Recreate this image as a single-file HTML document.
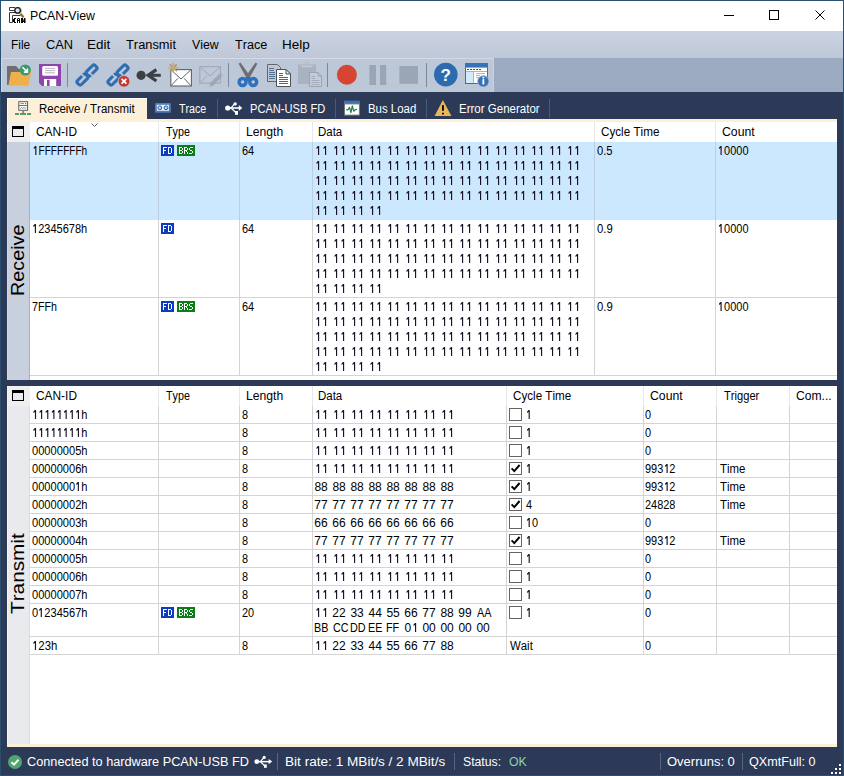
<!DOCTYPE html><html><head><meta charset="utf-8"><title>PCAN-View</title><style>
*{margin:0;padding:0;box-sizing:border-box}
html,body{width:844px;height:776px;overflow:hidden}
body{position:relative;font-kerning:none;font-feature-settings:"kern" 0;font-family:"Liberation Sans",sans-serif;font-size:12px;color:#000;background:#2c3a58}
.a{position:absolute}
.t{position:absolute;white-space:nowrap;line-height:14px}
svg{position:absolute;overflow:visible}
.bw{color:#fff}
.vl{position:absolute;width:1px;background:#d4d4d4}
.hl{position:absolute;height:1px;background:#d4d4d4}
</style></head><body>
<svg width="0" height="0" style="left:0;top:0"><defs><path id="one" fill="#1a1226" d="M2 0H3.15V9H2V1.9L0.5 2.9V1.6Z"/><symbol id="fd" overflow="visible"><rect x="0" y="0" width="13" height="11" fill="#0b3cc0"/><g fill="#fff"><rect x="2" y="2" width="1" height="7"/><rect x="2" y="2" width="4" height="1"/><rect x="2" y="5" width="3" height="1"/><rect x="7" y="2" width="1" height="7"/><rect x="7" y="2" width="3" height="1"/><rect x="7" y="8" width="3" height="1"/><rect x="10" y="3" width="1" height="5"/></g></symbol><symbol id="brs" overflow="visible"><rect x="16" y="0" width="18" height="11" fill="#0a7f18"/><g fill="#fff"><rect x="18" y="2" width="1" height="7"/><rect x="18" y="2" width="3" height="1"/><rect x="18" y="5" width="3" height="1"/><rect x="18" y="8" width="3" height="1"/><rect x="21" y="3" width="1" height="2"/><rect x="21" y="6" width="1" height="2"/><rect x="23" y="2" width="1" height="7"/><rect x="23" y="2" width="3" height="1"/><rect x="23" y="5" width="3" height="1"/><rect x="26" y="3" width="1" height="2"/><rect x="25" y="6" width="1" height="1"/><rect x="26" y="7" width="1" height="2"/><rect x="29" y="2" width="3" height="1"/><rect x="28" y="3" width="1" height="2"/><rect x="29" y="5" width="2" height="1"/><rect x="31" y="6" width="1" height="2"/><rect x="28" y="8" width="3" height="1"/></g></symbol></defs></svg>
<div class="a" style="left:0;top:0;width:844px;height:31px;background:#fff"></div>
<svg style="left:0;top:0" width="30" height="30" viewBox="0 0 30 30">
<path d="M9.5 10.5 V7.5 H15 M9.5 10.5 H14.6 M9.5 12.5 H15.2 M9.5 12.5 V22.5 H12.5 V15.5 H20.5" fill="none" stroke="#3c3c3c" stroke-width="1"/>
<path d="M20.3 13.8 L23.6 17.2" stroke="#8c6b28" stroke-width="2.2"/>
<circle cx="17.6" cy="10.4" r="2.8" fill="#dfe4ea" stroke="#111" stroke-width="1.3"/>
<path d="M20.8 8.6 A3.8 3.8 0 0 1 21.2 12.4" fill="none" stroke="#8a9499" stroke-width="0.8"/>
<g fill="#000">
<rect x="13" y="19" width="2" height="3"/><rect x="14" y="18" width="2" height="1"/><rect x="14" y="22" width="2" height="1"/>
<rect x="17" y="19" width="1" height="4"/><rect x="19" y="19" width="1" height="4"/><rect x="17.5" y="18" width="2" height="1"/><rect x="17" y="20" width="3" height="1"/>
<rect x="21" y="18" width="2" height="5"/><rect x="24" y="18" width="1.5" height="5"/><rect x="22.5" y="19" width="1" height="1.5"/><rect x="23" y="20.5" width="1" height="1.5"/>
</g>
</svg>

<div class="t" style="left:29.69px;top:8.84px;line-height:14px;font-size:12px;transform:scaleX(1.0258);transform-origin:0 0;">PCAN-View</div>
<div class="a" style="left:724px;top:15px;width:10px;height:1px;background:#000"></div>
<div class="a" style="left:769px;top:10px;width:10px;height:10px;border:1px solid #000"></div>
<svg style="left:815px;top:10px" width="10" height="10"><path d="M0.5 0.5L9.5 9.5M9.5 0.5L0.5 9.5" stroke="#000" stroke-width="1"/></svg>
<div class="a" style="left:0;top:31px;width:844px;height:27px;background:linear-gradient(#cbd3e1,#bfc8d8)"></div>
<div class="t" style="left:10.77px;top:37.84px;line-height:14px;font-size:12px;transform:scaleX(0.9906);transform-origin:0 0;">File</div>
<div class="t" style="left:45.75px;top:37.84px;line-height:14px;font-size:12px;transform:scaleX(1.0654);transform-origin:0 0;">CAN</div>
<div class="t" style="left:86.90px;top:37.84px;line-height:14px;font-size:12px;transform:scaleX(1.1221);transform-origin:0 0;">Edit</div>
<div class="t" style="left:126.31px;top:37.84px;line-height:14px;font-size:12px;transform:scaleX(1.0710);transform-origin:0 0;">Transmit</div>
<div class="t" style="left:192.25px;top:37.84px;line-height:14px;font-size:12px;transform:scaleX(1.0275);transform-origin:0 0;">View</div>
<div class="t" style="left:234.92px;top:37.84px;line-height:14px;font-size:12px;transform:scaleX(1.0545);transform-origin:0 0;">Trace</div>
<div class="t" style="left:282.39px;top:37.84px;line-height:14px;font-size:12px;transform:scaleX(1.1254);transform-origin:0 0;">Help</div>
<div class="a" style="left:0;top:58px;width:844px;height:34px;background:#9caac1"></div>
<div class="a" style="left:1px;top:58px;width:493px;height:34px;background:#bcc7d8;border-top:1px solid #d3dae6;border-left:1px solid #d3dae6;border-right:1px solid #c9d2e0"></div>
<svg style="left:0;top:57px" width="500" height="35" viewBox="0 57 500 35">
<!-- separators -->
<g fill="#7d889b"><rect x="67" y="63" width="1" height="24"/><rect x="228" y="63" width="1" height="24"/><rect x="327" y="63" width="1" height="24"/><rect x="426" y="63" width="1" height="24"/></g>
<!-- open folder -->
<path d="M7 66 H16 L19 69 H23 V85 H7 Z" fill="#6f6f73"/>
<path d="M11 72 H31 L28.5 85.5 H8.5 Z" fill="#efb04c"/>
<circle cx="25.3" cy="70" r="5.6" fill="#3a9a6c"/>
<path d="M22.5 67.2 L27 71.7 M27.4 68.6 V72.1 H23.9" fill="none" stroke="#fff" stroke-width="1.6"/>
<!-- save -->
<path d="M39 64 H61 V86 H42 L39 83 Z" fill="#8e44ad"/>
<rect x="42.2" y="66" width="15.8" height="9.8" rx="1.5" fill="#fff"/>
<g stroke="#a89bb0" stroke-width="0.8"><line x1="45" y1="68.4" x2="55" y2="68.4"/><line x1="45" y1="70.6" x2="55" y2="70.6"/><line x1="45" y1="72.8" x2="55" y2="72.8"/></g>
<rect x="44" y="79" width="12.2" height="7" fill="#fff"/>
<rect x="47" y="79.8" width="2.6" height="6.2" fill="#8e44ad"/>
<!-- link -->
<g transform="translate(87 75) rotate(-45)" fill="none" stroke="#2f6db3" stroke-width="3">
<path d="M4.2 2.8 H10.7 Q12.5 2.8 12.5 1 V-1 Q12.5 -2.8 10.7 -2.8 H2.3 Q0.5 -2.8 0.5 -1 V1 Q0.5 2.8 2.3 2.8 H2.6"/>
<path d="M-4.2 -2.8 H-10.7 Q-12.5 -2.8 -12.5 -1 V1 Q-12.5 2.8 -10.7 2.8 H-2.3 Q-0.5 2.8 -0.5 1 V-1 Q-0.5 -2.8 -2.3 -2.8 H-2.6"/>
</g>
<!-- unlink -->
<g transform="translate(118 75) rotate(-45)" fill="none" stroke="#2f6db3" stroke-width="3">
<path d="M4.2 2.8 H10.7 Q12.5 2.8 12.5 1 V-1 Q12.5 -2.8 10.7 -2.8 H2.3 Q0.5 -2.8 0.5 -1 V1 Q0.5 2.8 2.3 2.8 H2.6"/>
<path d="M-4.2 -2.8 H-10.7 Q-12.5 -2.8 -12.5 -1 V1 Q-12.5 2.8 -10.7 2.8 H-2.3 Q-0.5 2.8 -0.5 1 V-1 Q-0.5 -2.8 -2.3 -2.8 H-2.6"/>
</g>
<circle cx="124" cy="81.3" r="5.8" fill="#c9372c" stroke="#bcc7d8" stroke-width="0.8"/>
<path d="M121.6 78.9 L126.4 83.7 M126.4 78.9 L121.6 83.7" stroke="#fff" stroke-width="1.7"/>
<!-- receive arrow -->
<path d="M156.4 69.6 L148.2 75.3 L156.4 81" fill="none" stroke="#3b4043" stroke-width="3.3" stroke-linejoin="miter"/>
<rect x="148" y="73.8" width="12.8" height="3" fill="#3b4043"/>
<circle cx="141.1" cy="75.3" r="4.6" fill="#3b4043"/>
<!-- new message -->
<rect x="170.8" y="69.6" width="20.6" height="16.4" fill="#fff" stroke="#5f6369" stroke-width="1.1"/>
<path d="M171.2 70 L181 79 L190.8 70 M171.2 85.6 L177.8 78.4 M190.8 85.6 L184.2 78.4" fill="none" stroke="#5f6369" stroke-width="1"/>
<g stroke-width="1.6" stroke-linecap="round"><line x1="170.2" y1="64.6" x2="176.4" y2="70.8" stroke="#a99c86"/><line x1="176.4" y1="64.6" x2="170.2" y2="70.8" stroke="#a99c86"/><line x1="173.3" y1="63.4" x2="173.3" y2="72" stroke="#dba94f"/><line x1="169" y1="67.7" x2="177.6" y2="67.7" stroke="#dba94f"/></g>
<!-- edit message (disabled) -->
<rect x="199.8" y="66.7" width="20.6" height="16.4" fill="none" stroke="#9ea7b3" stroke-width="1.1"/>
<path d="M200.2 67.1 L210.1 76 L220 67.1 M200.2 82.7 L207 75.6" fill="none" stroke="#9ea7b3" stroke-width="1"/>
<path d="M209.4 86.8 L210.6 82.6 L219.4 73.8 L222.2 76.6 L213.4 85.4 Z" fill="#9ea7b3"/>
<path d="M220.3 72.6 L223.2 75.5" stroke="#9ea7b3" stroke-width="1"/>
<!-- cut -->
<path d="M238.6 63.8 L240.4 62.6 L250.2 76.2 L246.2 77.4 Z" fill="#6c6e70"/>
<path d="M257.4 63.8 L255.6 62.6 L245.8 76.2 L249.8 77.4 Z" fill="#6c6e70"/>
<circle cx="242.6" cy="82" r="3.5" fill="none" stroke="#2f70bd" stroke-width="3.4"/>
<circle cx="253.2" cy="82" r="3.5" fill="none" stroke="#2f70bd" stroke-width="3.4"/>
<rect x="245.5" y="77" width="5" height="4" fill="#2f70bd"/>
<!-- copy -->
<path d="M267.5 64.5 H277.5 L280.5 67.5 V81.5 H267.5 Z" fill="#c3c9d2" stroke="#62676e" stroke-width="1"/>
<g stroke="#56708f" stroke-width="1"><line x1="269" y1="68.5" x2="274" y2="68.5"/><line x1="269" y1="70.5" x2="274" y2="70.5"/><line x1="269" y1="72.5" x2="275" y2="72.5"/><line x1="269" y1="74.5" x2="275" y2="74.5"/><line x1="269" y1="76.5" x2="275" y2="76.5"/><line x1="269" y1="78.5" x2="275" y2="78.5"/></g>
<path d="M276.5 69.5 H286 L290.5 74 V86.5 H276.5 Z" fill="#fff" stroke="#4e535b" stroke-width="1"/>
<path d="M286 69.5 V74 H290.5 Z" fill="#e8eaee" stroke="#4e535b" stroke-width="1"/>
<g stroke="#3d6a9a" stroke-width="1"><line x1="279" y1="73.5" x2="283" y2="73.5"/><line x1="279" y1="75.5" x2="283" y2="75.5"/><line x1="279" y1="77.5" x2="288" y2="77.5"/><line x1="279" y1="79.5" x2="288" y2="79.5"/><line x1="279" y1="81.5" x2="288" y2="81.5"/><line x1="279" y1="83.5" x2="288" y2="83.5"/></g>
<!-- paste (disabled) -->
<rect x="298" y="64.5" width="18" height="19.5" fill="#a9b2bf"/>
<rect x="301" y="65" width="12" height="2.4" rx="1" fill="#c3cbd8" stroke="#a9b2bf" stroke-width="0.6"/>
<circle cx="307" cy="63.9" r="1.6" fill="#c3cbd8" stroke="#a9b2bf" stroke-width="0.8"/>
<path d="M309.5 72.5 H318 L321.5 76 V86.5 H309.5 Z" fill="#c4ccd8" stroke="#9aa3b0" stroke-width="1"/>
<path d="M318 72.5 V76 H321.5" fill="none" stroke="#9aa3b0" stroke-width="1"/>
<g stroke="#9aa3b0" stroke-width="0.8"><line x1="311.5" y1="76.5" x2="315" y2="76.5"/><line x1="311.5" y1="78.5" x2="315" y2="78.5"/><line x1="311.5" y1="80.5" x2="319.5" y2="80.5"/><line x1="311.5" y1="82.5" x2="319.5" y2="82.5"/><line x1="311.5" y1="84.5" x2="319.5" y2="84.5"/></g>
<!-- record / pause / stop -->
<circle cx="346.9" cy="74.8" r="10" fill="#d64532"/>
<rect x="369.4" y="65" width="6.6" height="20" fill="#9aa5b6"/>
<rect x="380" y="65" width="6.2" height="20" fill="#9aa5b6"/>
<rect x="399.4" y="66" width="18.6" height="17.8" fill="#9aa5b6"/>
<!-- help -->
<circle cx="445.8" cy="74.6" r="11.8" fill="#2d6bb0"/>
<text x="445.8" y="81.2" font-family="Liberation Sans" font-weight="bold" font-size="17" fill="#fff" text-anchor="middle">?</text>
<!-- info window -->
<rect x="465.5" y="63.5" width="22" height="20" fill="#fff" stroke="#62676e" stroke-width="1"/>
<rect x="465" y="63" width="23" height="4.6" fill="#3572b8"/>
<g fill="#4a4f55"><rect x="467" y="69" width="2" height="1"/><rect x="470" y="69" width="2" height="1"/><rect x="473" y="69" width="2" height="1"/><rect x="476" y="69" width="2" height="1"/><rect x="479" y="69" width="2" height="1"/></g>
<rect x="466" y="71" width="21" height="0.8" fill="#9aa0a8"/>
<rect x="466" y="72" width="7" height="11" fill="#d4eaf9"/>
<line x1="473.5" y1="72" x2="473.5" y2="83" stroke="#9aa0a8" stroke-width="0.8"/>
<g stroke="#8a9098" stroke-width="0.7"><line x1="476" y1="73.6" x2="485" y2="73.6"/><line x1="476" y1="75.6" x2="480" y2="75.6"/><line x1="476" y1="77.6" x2="479" y2="77.6"/></g>
<circle cx="483.3" cy="81.3" r="5.7" fill="#3572b8" stroke="#bcc7d8" stroke-width="0.7"/>
<rect x="482.4" y="79.2" width="1.9" height="5.2" fill="#fff"/><rect x="482.4" y="76.8" width="1.9" height="1.6" fill="#fff"/>
</svg>
<div class="a" style="left:0;top:92px;width:844px;height:684px;background:#2c3a58"></div>
<div class="a" style="left:7px;top:98px;width:140px;height:24px;background:#fdf0d8;border-left:1px solid #fff;border-top:1px solid #fff"></div>
<svg style="left:0;top:92px" width="560" height="30" viewBox="0 92 560 30">
<rect x="18.8" y="101.7" width="8.8" height="8.6" fill="#fff" stroke="#5c5c5c" stroke-width="1"/>
<line x1="18.8" y1="105.5" x2="27.6" y2="105.5" stroke="#5c5c5c" stroke-width="0.9"/>
<line x1="20.5" y1="103.6" x2="24" y2="103.6" stroke="#6a6a6a" stroke-width="0.8"/>
<rect x="25" y="103" width="1.2" height="1.2" fill="#6a6a6a"/>
<path d="M20.3 108.6 L21.5 107.2 L22.7 108.6 L23.9 107.2 L25.1 108.6 L26.2 107.3" fill="none" stroke="#6a6a6a" stroke-width="0.7"/>
<rect x="22.3" y="110.5" width="1.8" height="2.8" fill="#5c9a6e"/>
<rect x="15" y="113" width="4" height="2" fill="#5c9a6e"/>
<rect x="20" y="113" width="6" height="2" fill="#5c9a6e"/>
<rect x="27" y="113" width="4" height="2" fill="#5c9a6e"/>
<rect x="155" y="103" width="15.9" height="9.8" rx="1" fill="#4b7bb8"/>
<rect x="156.8" y="104.8" width="12.1" height="6" fill="#eef4fc"/>
<circle cx="159.8" cy="107.8" r="1.9" fill="#bcd6f2" stroke="#2a5a98" stroke-width="1"/>
<circle cx="166" cy="107.8" r="1.9" fill="#bcd6f2" stroke="#2a5a98" stroke-width="1"/>
<circle cx="227.7" cy="108" r="2.6" fill="#fff"/>
<rect x="227.7" y="107.2" width="12" height="1.6" fill="#fff"/>
<path d="M238.8 105 L242.3 108 L238.8 111 Z" fill="#fff"/>
<path d="M231 108 L234.4 104.2 M231 108 L235.8 112.5" fill="none" stroke="#fff" stroke-width="1.2"/>
<circle cx="235.2" cy="103.9" r="1.7" fill="#fff"/>
<rect x="235" y="111" width="3" height="3.8" fill="#fff"/>
<rect x="344" y="100.7" width="15.9" height="3.2" fill="#3f73b0"/>
<rect x="344.5" y="103.9" width="14.9" height="11.2" fill="#fff" stroke="#70757d" stroke-width="1"/>
<path d="M346.2 109.6 L348 109.8 L349.5 107.4 L350.9 112.6 L352.3 105.8 L353.7 111.2 L355.5 109.5 L357 109.3" fill="none" stroke="#1f7d4c" stroke-width="1.2" stroke-linejoin="round"/>
<path d="M442.9 99.9 L451.4 115.9 L434.6 115.9 Z" fill="#e9b65a"/>
<rect x="442" y="105.2" width="1.9" height="5.5" fill="#000"/>
<rect x="442" y="112.8" width="1.9" height="1.6" fill="#000"/>
</svg>

<div class="t" style="left:38.86px;top:101.84px;line-height:14px;font-size:12px;transform:scaleX(0.9570);transform-origin:0 0;">Receive / Transmit</div>
<div class="t bw" style="left:179.26px;top:101.84px;line-height:14px;font-size:12px;transform:scaleX(0.8905);transform-origin:0 0;">Trace</div>
<div class="t bw" style="left:249.99px;top:101.84px;line-height:14px;font-size:12px;transform:scaleX(0.9250);transform-origin:0 0;">PCAN-USB FD</div>
<div class="t bw" style="left:367.66px;top:101.84px;line-height:14px;font-size:12px;transform:scaleX(0.9520);transform-origin:0 0;">Bus Load</div>
<div class="t bw" style="left:458.66px;top:101.84px;line-height:14px;font-size:12px;transform:scaleX(0.9596);transform-origin:0 0;">Error Generator</div>
<div class="a" style="left:217px;top:99px;width:1px;height:19px;background:#4a5a7a"></div>
<div class="a" style="left:335px;top:99px;width:1px;height:19px;background:#4a5a7a"></div>
<div class="a" style="left:426px;top:99px;width:1px;height:19px;background:#4a5a7a"></div>
<div class="a" style="left:549px;top:99px;width:1px;height:19px;background:#4a5a7a"></div>
<div class="a" style="left:7px;top:119px;width:830px;height:3px;background:#fdf0d8"></div>
<div class="a" style="left:7px;top:122px;width:830px;height:258px;background:#fff"></div>
<div class="a" style="left:7px;top:142px;width:23px;height:238px;background:#c8d0de;border-left:1px solid #d2dae8;border-right:1px solid #aab1c2"></div>
<div class="a" style="left:8px;top:122px;width:22px;height:20px;background:#efefef"></div>
<div class="a" style="left:7px;top:122px;width:1px;height:20px;background:#fff"></div>
<div class="a" style="left:12px;top:126px;width:12px;height:11px;border:1.5px solid #000;border-top-width:3px;background:#ececec"></div>
<div class="a" style="left:30px;top:142px;width:807px;height:78px;background:#cce8ff"></div>
<div class="vl" style="left:158px;top:122px;height:20px;background:#e8e8e8"></div>
<div class="vl" style="left:158px;top:142px;height:78px;background:#bccfe0"></div>
<div class="vl" style="left:158px;top:220px;height:155px"></div>
<div class="vl" style="left:239px;top:122px;height:20px;background:#e8e8e8"></div>
<div class="vl" style="left:239px;top:142px;height:78px;background:#bccfe0"></div>
<div class="vl" style="left:239px;top:220px;height:155px"></div>
<div class="vl" style="left:312px;top:122px;height:20px;background:#e8e8e8"></div>
<div class="vl" style="left:312px;top:142px;height:78px;background:#bccfe0"></div>
<div class="vl" style="left:312px;top:220px;height:155px"></div>
<div class="vl" style="left:594px;top:122px;height:20px;background:#e8e8e8"></div>
<div class="vl" style="left:594px;top:142px;height:78px;background:#bccfe0"></div>
<div class="vl" style="left:594px;top:220px;height:155px"></div>
<div class="vl" style="left:715px;top:122px;height:20px;background:#e8e8e8"></div>
<div class="vl" style="left:715px;top:142px;height:78px;background:#bccfe0"></div>
<div class="vl" style="left:715px;top:220px;height:155px"></div>
<div class="hl" style="left:30px;top:297px;width:807px"></div>
<div class="hl" style="left:30px;top:375px;width:807px"></div>
<div class="t" style="left:36.00px;top:124.84px;line-height:14px;font-size:12px;transform:scaleX(0.9913);transform-origin:0 0;">CAN-ID</div>
<div class="t" style="left:165.66px;top:124.84px;line-height:14px;font-size:12px;transform:scaleX(0.8966);transform-origin:0 0;">Type</div>
<div class="t" style="left:245.50px;top:124.84px;line-height:14px;font-size:12px;transform:scaleX(1.0160);transform-origin:0 0;">Length</div>
<div class="t" style="left:318.26px;top:124.84px;line-height:14px;font-size:12px;transform:scaleX(0.9564);transform-origin:0 0;">Data</div>
<div class="t" style="left:600.81px;top:124.84px;line-height:14px;font-size:12px;transform:scaleX(0.9734);transform-origin:0 0;">Cycle Time</div>
<div class="t" style="left:722.08px;top:124.84px;line-height:14px;font-size:12px;transform:scaleX(1.0216);transform-origin:0 0;">Count</div>
<svg style="left:91px;top:123px" width="8" height="5"><path d="M0.5 0.5L3.5 3.5L6.5 0.5" fill="none" stroke="#5a5a5a" stroke-width="1"/></svg>
<div class="t" style="left:6.79px;top:295.62px;line-height:22px;font-size:18.5px;transform:rotate(-90deg) scaleX(1.0698);transform-origin:0 0">Receive</div>
<div class="t" style="left:32.53px;top:143.84px;line-height:14px;font-size:12px;transform:scaleX(0.8370);transform-origin:0 0;"><i style="color:transparent;font-style:normal">1</i>FFFFFFFh</div>
<svg style="left:161px;top:145px" width="34" height="11"><use href="#fd"/><use href="#brs"/></svg>
<div class="t" style="left:241.95px;top:143.84px;line-height:14px;font-size:12px;transform:scaleX(0.9100);transform-origin:0 0;">64</div>
<div class="t" style="left:596.66px;top:143.84px;line-height:14px;font-size:12px;transform:scaleX(0.9358);transform-origin:0 0;">0.5</div>
<div class="t" style="left:717.57px;top:143.84px;line-height:14px;font-size:12px;transform:scaleX(0.9129);transform-origin:0 0;"><i style="color:transparent;font-style:normal">1</i>0000</div>
<div class="t" style="left:31.86px;top:221.84px;line-height:14px;font-size:12px;transform:scaleX(0.9183);transform-origin:0 0;"><i style="color:transparent;font-style:normal">1</i>2345678h</div>
<svg style="left:161px;top:223px" width="34" height="11"><use href="#fd"/></svg>
<div class="t" style="left:241.95px;top:221.84px;line-height:14px;font-size:12px;transform:scaleX(0.9100);transform-origin:0 0;">64</div>
<div class="t" style="left:596.66px;top:221.84px;line-height:14px;font-size:12px;transform:scaleX(0.9396);transform-origin:0 0;">0.9</div>
<div class="t" style="left:717.57px;top:221.84px;line-height:14px;font-size:12px;transform:scaleX(0.9129);transform-origin:0 0;"><i style="color:transparent;font-style:normal">1</i>0000</div>
<div class="t" style="left:32.15px;top:299.84px;line-height:14px;font-size:12px;transform:scaleX(0.8905);transform-origin:0 0;">7FFh</div>
<svg style="left:161px;top:301px" width="34" height="11"><use href="#fd"/><use href="#brs"/></svg>
<div class="t" style="left:241.95px;top:299.84px;line-height:14px;font-size:12px;transform:scaleX(0.9100);transform-origin:0 0;">64</div>
<div class="t" style="left:596.66px;top:299.84px;line-height:14px;font-size:12px;transform:scaleX(0.9396);transform-origin:0 0;">0.9</div>
<div class="t" style="left:717.57px;top:299.84px;line-height:14px;font-size:12px;transform:scaleX(0.9129);transform-origin:0 0;"><i style="color:transparent;font-style:normal">1</i>0000</div>
<svg style="left:0;top:0" width="844" height="776"><use href="#one" x="33.26" y="146"/><use href="#one" x="316" y="146"/><use href="#one" x="323" y="146"/><use href="#one" x="334" y="146"/><use href="#one" x="341" y="146"/><use href="#one" x="352" y="146"/><use href="#one" x="359" y="146"/><use href="#one" x="370" y="146"/><use href="#one" x="377" y="146"/><use href="#one" x="388" y="146"/><use href="#one" x="395" y="146"/><use href="#one" x="406" y="146"/><use href="#one" x="413" y="146"/><use href="#one" x="424" y="146"/><use href="#one" x="431" y="146"/><use href="#one" x="442" y="146"/><use href="#one" x="449" y="146"/><use href="#one" x="460" y="146"/><use href="#one" x="467" y="146"/><use href="#one" x="478" y="146"/><use href="#one" x="485" y="146"/><use href="#one" x="496" y="146"/><use href="#one" x="503" y="146"/><use href="#one" x="514" y="146"/><use href="#one" x="521" y="146"/><use href="#one" x="532" y="146"/><use href="#one" x="539" y="146"/><use href="#one" x="550" y="146"/><use href="#one" x="557" y="146"/><use href="#one" x="568" y="146"/><use href="#one" x="575" y="146"/><use href="#one" x="316" y="161"/><use href="#one" x="323" y="161"/><use href="#one" x="334" y="161"/><use href="#one" x="341" y="161"/><use href="#one" x="352" y="161"/><use href="#one" x="359" y="161"/><use href="#one" x="370" y="161"/><use href="#one" x="377" y="161"/><use href="#one" x="388" y="161"/><use href="#one" x="395" y="161"/><use href="#one" x="406" y="161"/><use href="#one" x="413" y="161"/><use href="#one" x="424" y="161"/><use href="#one" x="431" y="161"/><use href="#one" x="442" y="161"/><use href="#one" x="449" y="161"/><use href="#one" x="460" y="161"/><use href="#one" x="467" y="161"/><use href="#one" x="478" y="161"/><use href="#one" x="485" y="161"/><use href="#one" x="496" y="161"/><use href="#one" x="503" y="161"/><use href="#one" x="514" y="161"/><use href="#one" x="521" y="161"/><use href="#one" x="532" y="161"/><use href="#one" x="539" y="161"/><use href="#one" x="550" y="161"/><use href="#one" x="557" y="161"/><use href="#one" x="568" y="161"/><use href="#one" x="575" y="161"/><use href="#one" x="316" y="176"/><use href="#one" x="323" y="176"/><use href="#one" x="334" y="176"/><use href="#one" x="341" y="176"/><use href="#one" x="352" y="176"/><use href="#one" x="359" y="176"/><use href="#one" x="370" y="176"/><use href="#one" x="377" y="176"/><use href="#one" x="388" y="176"/><use href="#one" x="395" y="176"/><use href="#one" x="406" y="176"/><use href="#one" x="413" y="176"/><use href="#one" x="424" y="176"/><use href="#one" x="431" y="176"/><use href="#one" x="442" y="176"/><use href="#one" x="449" y="176"/><use href="#one" x="460" y="176"/><use href="#one" x="467" y="176"/><use href="#one" x="478" y="176"/><use href="#one" x="485" y="176"/><use href="#one" x="496" y="176"/><use href="#one" x="503" y="176"/><use href="#one" x="514" y="176"/><use href="#one" x="521" y="176"/><use href="#one" x="532" y="176"/><use href="#one" x="539" y="176"/><use href="#one" x="550" y="176"/><use href="#one" x="557" y="176"/><use href="#one" x="568" y="176"/><use href="#one" x="575" y="176"/><use href="#one" x="316" y="191"/><use href="#one" x="323" y="191"/><use href="#one" x="334" y="191"/><use href="#one" x="341" y="191"/><use href="#one" x="352" y="191"/><use href="#one" x="359" y="191"/><use href="#one" x="370" y="191"/><use href="#one" x="377" y="191"/><use href="#one" x="388" y="191"/><use href="#one" x="395" y="191"/><use href="#one" x="406" y="191"/><use href="#one" x="413" y="191"/><use href="#one" x="424" y="191"/><use href="#one" x="431" y="191"/><use href="#one" x="442" y="191"/><use href="#one" x="449" y="191"/><use href="#one" x="460" y="191"/><use href="#one" x="467" y="191"/><use href="#one" x="478" y="191"/><use href="#one" x="485" y="191"/><use href="#one" x="496" y="191"/><use href="#one" x="503" y="191"/><use href="#one" x="514" y="191"/><use href="#one" x="521" y="191"/><use href="#one" x="532" y="191"/><use href="#one" x="539" y="191"/><use href="#one" x="550" y="191"/><use href="#one" x="557" y="191"/><use href="#one" x="568" y="191"/><use href="#one" x="575" y="191"/><use href="#one" x="316" y="206"/><use href="#one" x="323" y="206"/><use href="#one" x="334" y="206"/><use href="#one" x="341" y="206"/><use href="#one" x="352" y="206"/><use href="#one" x="359" y="206"/><use href="#one" x="370" y="206"/><use href="#one" x="377" y="206"/><use href="#one" x="718.52" y="146"/><use href="#one" x="32.83" y="224"/><use href="#one" x="316" y="224"/><use href="#one" x="323" y="224"/><use href="#one" x="334" y="224"/><use href="#one" x="341" y="224"/><use href="#one" x="352" y="224"/><use href="#one" x="359" y="224"/><use href="#one" x="370" y="224"/><use href="#one" x="377" y="224"/><use href="#one" x="388" y="224"/><use href="#one" x="395" y="224"/><use href="#one" x="406" y="224"/><use href="#one" x="413" y="224"/><use href="#one" x="424" y="224"/><use href="#one" x="431" y="224"/><use href="#one" x="442" y="224"/><use href="#one" x="449" y="224"/><use href="#one" x="460" y="224"/><use href="#one" x="467" y="224"/><use href="#one" x="478" y="224"/><use href="#one" x="485" y="224"/><use href="#one" x="496" y="224"/><use href="#one" x="503" y="224"/><use href="#one" x="514" y="224"/><use href="#one" x="521" y="224"/><use href="#one" x="532" y="224"/><use href="#one" x="539" y="224"/><use href="#one" x="550" y="224"/><use href="#one" x="557" y="224"/><use href="#one" x="568" y="224"/><use href="#one" x="575" y="224"/><use href="#one" x="316" y="239"/><use href="#one" x="323" y="239"/><use href="#one" x="334" y="239"/><use href="#one" x="341" y="239"/><use href="#one" x="352" y="239"/><use href="#one" x="359" y="239"/><use href="#one" x="370" y="239"/><use href="#one" x="377" y="239"/><use href="#one" x="388" y="239"/><use href="#one" x="395" y="239"/><use href="#one" x="406" y="239"/><use href="#one" x="413" y="239"/><use href="#one" x="424" y="239"/><use href="#one" x="431" y="239"/><use href="#one" x="442" y="239"/><use href="#one" x="449" y="239"/><use href="#one" x="460" y="239"/><use href="#one" x="467" y="239"/><use href="#one" x="478" y="239"/><use href="#one" x="485" y="239"/><use href="#one" x="496" y="239"/><use href="#one" x="503" y="239"/><use href="#one" x="514" y="239"/><use href="#one" x="521" y="239"/><use href="#one" x="532" y="239"/><use href="#one" x="539" y="239"/><use href="#one" x="550" y="239"/><use href="#one" x="557" y="239"/><use href="#one" x="568" y="239"/><use href="#one" x="575" y="239"/><use href="#one" x="316" y="254"/><use href="#one" x="323" y="254"/><use href="#one" x="334" y="254"/><use href="#one" x="341" y="254"/><use href="#one" x="352" y="254"/><use href="#one" x="359" y="254"/><use href="#one" x="370" y="254"/><use href="#one" x="377" y="254"/><use href="#one" x="388" y="254"/><use href="#one" x="395" y="254"/><use href="#one" x="406" y="254"/><use href="#one" x="413" y="254"/><use href="#one" x="424" y="254"/><use href="#one" x="431" y="254"/><use href="#one" x="442" y="254"/><use href="#one" x="449" y="254"/><use href="#one" x="460" y="254"/><use href="#one" x="467" y="254"/><use href="#one" x="478" y="254"/><use href="#one" x="485" y="254"/><use href="#one" x="496" y="254"/><use href="#one" x="503" y="254"/><use href="#one" x="514" y="254"/><use href="#one" x="521" y="254"/><use href="#one" x="532" y="254"/><use href="#one" x="539" y="254"/><use href="#one" x="550" y="254"/><use href="#one" x="557" y="254"/><use href="#one" x="568" y="254"/><use href="#one" x="575" y="254"/><use href="#one" x="316" y="269"/><use href="#one" x="323" y="269"/><use href="#one" x="334" y="269"/><use href="#one" x="341" y="269"/><use href="#one" x="352" y="269"/><use href="#one" x="359" y="269"/><use href="#one" x="370" y="269"/><use href="#one" x="377" y="269"/><use href="#one" x="388" y="269"/><use href="#one" x="395" y="269"/><use href="#one" x="406" y="269"/><use href="#one" x="413" y="269"/><use href="#one" x="424" y="269"/><use href="#one" x="431" y="269"/><use href="#one" x="442" y="269"/><use href="#one" x="449" y="269"/><use href="#one" x="460" y="269"/><use href="#one" x="467" y="269"/><use href="#one" x="478" y="269"/><use href="#one" x="485" y="269"/><use href="#one" x="496" y="269"/><use href="#one" x="503" y="269"/><use href="#one" x="514" y="269"/><use href="#one" x="521" y="269"/><use href="#one" x="532" y="269"/><use href="#one" x="539" y="269"/><use href="#one" x="550" y="269"/><use href="#one" x="557" y="269"/><use href="#one" x="568" y="269"/><use href="#one" x="575" y="269"/><use href="#one" x="316" y="284"/><use href="#one" x="323" y="284"/><use href="#one" x="334" y="284"/><use href="#one" x="341" y="284"/><use href="#one" x="352" y="284"/><use href="#one" x="359" y="284"/><use href="#one" x="370" y="284"/><use href="#one" x="377" y="284"/><use href="#one" x="718.52" y="224"/><use href="#one" x="316" y="302"/><use href="#one" x="323" y="302"/><use href="#one" x="334" y="302"/><use href="#one" x="341" y="302"/><use href="#one" x="352" y="302"/><use href="#one" x="359" y="302"/><use href="#one" x="370" y="302"/><use href="#one" x="377" y="302"/><use href="#one" x="388" y="302"/><use href="#one" x="395" y="302"/><use href="#one" x="406" y="302"/><use href="#one" x="413" y="302"/><use href="#one" x="424" y="302"/><use href="#one" x="431" y="302"/><use href="#one" x="442" y="302"/><use href="#one" x="449" y="302"/><use href="#one" x="460" y="302"/><use href="#one" x="467" y="302"/><use href="#one" x="478" y="302"/><use href="#one" x="485" y="302"/><use href="#one" x="496" y="302"/><use href="#one" x="503" y="302"/><use href="#one" x="514" y="302"/><use href="#one" x="521" y="302"/><use href="#one" x="532" y="302"/><use href="#one" x="539" y="302"/><use href="#one" x="550" y="302"/><use href="#one" x="557" y="302"/><use href="#one" x="568" y="302"/><use href="#one" x="575" y="302"/><use href="#one" x="316" y="317"/><use href="#one" x="323" y="317"/><use href="#one" x="334" y="317"/><use href="#one" x="341" y="317"/><use href="#one" x="352" y="317"/><use href="#one" x="359" y="317"/><use href="#one" x="370" y="317"/><use href="#one" x="377" y="317"/><use href="#one" x="388" y="317"/><use href="#one" x="395" y="317"/><use href="#one" x="406" y="317"/><use href="#one" x="413" y="317"/><use href="#one" x="424" y="317"/><use href="#one" x="431" y="317"/><use href="#one" x="442" y="317"/><use href="#one" x="449" y="317"/><use href="#one" x="460" y="317"/><use href="#one" x="467" y="317"/><use href="#one" x="478" y="317"/><use href="#one" x="485" y="317"/><use href="#one" x="496" y="317"/><use href="#one" x="503" y="317"/><use href="#one" x="514" y="317"/><use href="#one" x="521" y="317"/><use href="#one" x="532" y="317"/><use href="#one" x="539" y="317"/><use href="#one" x="550" y="317"/><use href="#one" x="557" y="317"/><use href="#one" x="568" y="317"/><use href="#one" x="575" y="317"/><use href="#one" x="316" y="332"/><use href="#one" x="323" y="332"/><use href="#one" x="334" y="332"/><use href="#one" x="341" y="332"/><use href="#one" x="352" y="332"/><use href="#one" x="359" y="332"/><use href="#one" x="370" y="332"/><use href="#one" x="377" y="332"/><use href="#one" x="388" y="332"/><use href="#one" x="395" y="332"/><use href="#one" x="406" y="332"/><use href="#one" x="413" y="332"/><use href="#one" x="424" y="332"/><use href="#one" x="431" y="332"/><use href="#one" x="442" y="332"/><use href="#one" x="449" y="332"/><use href="#one" x="460" y="332"/><use href="#one" x="467" y="332"/><use href="#one" x="478" y="332"/><use href="#one" x="485" y="332"/><use href="#one" x="496" y="332"/><use href="#one" x="503" y="332"/><use href="#one" x="514" y="332"/><use href="#one" x="521" y="332"/><use href="#one" x="532" y="332"/><use href="#one" x="539" y="332"/><use href="#one" x="550" y="332"/><use href="#one" x="557" y="332"/><use href="#one" x="568" y="332"/><use href="#one" x="575" y="332"/><use href="#one" x="316" y="347"/><use href="#one" x="323" y="347"/><use href="#one" x="334" y="347"/><use href="#one" x="341" y="347"/><use href="#one" x="352" y="347"/><use href="#one" x="359" y="347"/><use href="#one" x="370" y="347"/><use href="#one" x="377" y="347"/><use href="#one" x="388" y="347"/><use href="#one" x="395" y="347"/><use href="#one" x="406" y="347"/><use href="#one" x="413" y="347"/><use href="#one" x="424" y="347"/><use href="#one" x="431" y="347"/><use href="#one" x="442" y="347"/><use href="#one" x="449" y="347"/><use href="#one" x="460" y="347"/><use href="#one" x="467" y="347"/><use href="#one" x="478" y="347"/><use href="#one" x="485" y="347"/><use href="#one" x="496" y="347"/><use href="#one" x="503" y="347"/><use href="#one" x="514" y="347"/><use href="#one" x="521" y="347"/><use href="#one" x="532" y="347"/><use href="#one" x="539" y="347"/><use href="#one" x="550" y="347"/><use href="#one" x="557" y="347"/><use href="#one" x="568" y="347"/><use href="#one" x="575" y="347"/><use href="#one" x="316" y="362"/><use href="#one" x="323" y="362"/><use href="#one" x="334" y="362"/><use href="#one" x="341" y="362"/><use href="#one" x="352" y="362"/><use href="#one" x="359" y="362"/><use href="#one" x="370" y="362"/><use href="#one" x="377" y="362"/><use href="#one" x="718.52" y="302"/></svg>
<div class="a" style="left:7px;top:386px;width:830px;height:358px;background:#fff"></div>
<div class="a" style="left:7px;top:386px;width:23px;height:358px;background:#e9eaee;border-left:1px solid #f4f6fb;border-right:1px solid #d8dae6"></div>
<div class="a" style="left:8px;top:386px;width:22px;height:20px;background:#efefef"></div>
<div class="a" style="left:12px;top:390px;width:12px;height:11px;border:1.5px solid #000;border-top-width:3px;background:#ececec"></div>
<div class="a" style="left:7px;top:744px;width:830px;height:3px;background:#fdf0d8"></div>
<div class="vl" style="left:158px;top:386px;height:20px;background:#e8e8e8"></div>
<div class="vl" style="left:158px;top:406px;height:248px"></div>
<div class="vl" style="left:239px;top:386px;height:20px;background:#e8e8e8"></div>
<div class="vl" style="left:239px;top:406px;height:248px"></div>
<div class="vl" style="left:312px;top:386px;height:20px;background:#e8e8e8"></div>
<div class="vl" style="left:312px;top:406px;height:248px"></div>
<div class="vl" style="left:506px;top:386px;height:20px;background:#e8e8e8"></div>
<div class="vl" style="left:506px;top:406px;height:248px"></div>
<div class="vl" style="left:643px;top:386px;height:20px;background:#e8e8e8"></div>
<div class="vl" style="left:643px;top:406px;height:248px"></div>
<div class="vl" style="left:716px;top:386px;height:20px;background:#e8e8e8"></div>
<div class="vl" style="left:716px;top:406px;height:248px"></div>
<div class="vl" style="left:789px;top:386px;height:20px;background:#e8e8e8"></div>
<div class="vl" style="left:789px;top:406px;height:248px"></div>
<div class="t" style="left:36.00px;top:388.84px;line-height:14px;font-size:12px;transform:scaleX(0.9913);transform-origin:0 0;">CAN-ID</div>
<div class="t" style="left:165.66px;top:388.84px;line-height:14px;font-size:12px;transform:scaleX(0.8966);transform-origin:0 0;">Type</div>
<div class="t" style="left:245.50px;top:388.84px;line-height:14px;font-size:12px;transform:scaleX(1.0160);transform-origin:0 0;">Length</div>
<div class="t" style="left:318.26px;top:388.84px;line-height:14px;font-size:12px;transform:scaleX(0.9564);transform-origin:0 0;">Data</div>
<div class="t" style="left:512.91px;top:388.84px;line-height:14px;font-size:12px;transform:scaleX(0.9700);transform-origin:0 0;">Cycle Time</div>
<div class="t" style="left:649.88px;top:388.84px;line-height:14px;font-size:12px;transform:scaleX(1.0216);transform-origin:0 0;">Count</div>
<div class="t" style="left:723.75px;top:388.84px;line-height:14px;font-size:12px;transform:scaleX(0.9296);transform-origin:0 0;">Trigger</div>
<div class="t" style="left:795.58px;top:388.84px;line-height:14px;font-size:12px;transform:scaleX(1.0109);transform-origin:0 0;">Com...</div>
<div class="t" style="left:6.89px;top:614.17px;line-height:22px;font-size:18.5px;transform:rotate(-90deg) scaleX(1.1219);transform-origin:0 0">Transmit</div>
<div class="t" style="left:31.96px;top:407.84px;line-height:14px;font-size:12px;transform:scaleX(0.9183);transform-origin:0 0;"><i style="color:transparent;font-style:normal">1</i><i style="color:transparent;font-style:normal">1</i><i style="color:transparent;font-style:normal">1</i><i style="color:transparent;font-style:normal">1</i><i style="color:transparent;font-style:normal">1</i><i style="color:transparent;font-style:normal">1</i><i style="color:transparent;font-style:normal">1</i><i style="color:transparent;font-style:normal">1</i>h</div>
<div class="t" style="left:242.03px;top:407.84px;line-height:14px;font-size:12px;transform:scaleX(0.9100);transform-origin:0 0;">8</div>
<div class="a" style="left:509px;top:408px;width:13px;height:13px;border:1px solid #646464;background:#fff"></div>
<div class="t" style="left:525.67px;top:407.84px;line-height:14px;font-size:12px;transform:scaleX(0.9100);transform-origin:0 0;"><i style="color:transparent;font-style:normal">1</i></div>
<div class="t" style="left:645.47px;top:407.84px;line-height:14px;font-size:12px;transform:scaleX(0.9100);transform-origin:0 0;">0</div>
<div class="hl" style="left:30px;top:423px;width:807px"></div>
<div class="t" style="left:31.96px;top:425.84px;line-height:14px;font-size:12px;transform:scaleX(0.9183);transform-origin:0 0;"><i style="color:transparent;font-style:normal">1</i><i style="color:transparent;font-style:normal">1</i><i style="color:transparent;font-style:normal">1</i><i style="color:transparent;font-style:normal">1</i><i style="color:transparent;font-style:normal">1</i><i style="color:transparent;font-style:normal">1</i><i style="color:transparent;font-style:normal">1</i><i style="color:transparent;font-style:normal">1</i>h</div>
<div class="t" style="left:242.03px;top:425.84px;line-height:14px;font-size:12px;transform:scaleX(0.9100);transform-origin:0 0;">8</div>
<div class="a" style="left:509px;top:426px;width:13px;height:13px;border:1px solid #646464;background:#fff"></div>
<div class="t" style="left:525.67px;top:425.84px;line-height:14px;font-size:12px;transform:scaleX(0.9100);transform-origin:0 0;"><i style="color:transparent;font-style:normal">1</i></div>
<div class="t" style="left:645.47px;top:425.84px;line-height:14px;font-size:12px;transform:scaleX(0.9100);transform-origin:0 0;">0</div>
<div class="hl" style="left:30px;top:441px;width:807px"></div>
<div class="t" style="left:31.67px;top:443.84px;line-height:14px;font-size:12px;transform:scaleX(0.9232);transform-origin:0 0;">00000005h</div>
<div class="t" style="left:242.03px;top:443.84px;line-height:14px;font-size:12px;transform:scaleX(0.9100);transform-origin:0 0;">8</div>
<div class="a" style="left:509px;top:444px;width:13px;height:13px;border:1px solid #646464;background:#fff"></div>
<div class="t" style="left:525.67px;top:443.84px;line-height:14px;font-size:12px;transform:scaleX(0.9100);transform-origin:0 0;"><i style="color:transparent;font-style:normal">1</i></div>
<div class="t" style="left:645.47px;top:443.84px;line-height:14px;font-size:12px;transform:scaleX(0.9100);transform-origin:0 0;">0</div>
<div class="hl" style="left:30px;top:459px;width:807px"></div>
<div class="t" style="left:31.67px;top:461.84px;line-height:14px;font-size:12px;transform:scaleX(0.9232);transform-origin:0 0;">00000006h</div>
<div class="t" style="left:242.03px;top:461.84px;line-height:14px;font-size:12px;transform:scaleX(0.9100);transform-origin:0 0;">8</div>
<div class="a" style="left:509px;top:462px;width:13px;height:13px;border:1px solid #646464;background:#fff"></div>
<svg style="left:509px;top:462px" width="13" height="13"><path d="M2.6 6.4L5.3 9.1L10.6 3" fill="none" stroke="#000" stroke-width="2"/></svg>
<div class="t" style="left:525.67px;top:461.84px;line-height:14px;font-size:12px;transform:scaleX(0.9100);transform-origin:0 0;"><i style="color:transparent;font-style:normal">1</i></div>
<div class="t" style="left:645.39px;top:461.84px;line-height:14px;font-size:12px;transform:scaleX(0.9100);transform-origin:0 0;">993<i style="color:transparent;font-style:normal">1</i>2</div>
<div class="t" style="left:720.14px;top:461.84px;line-height:14px;font-size:12px;transform:scaleX(0.9512);transform-origin:0 0;">Time</div>
<div class="hl" style="left:30px;top:477px;width:807px"></div>
<div class="t" style="left:31.67px;top:479.84px;line-height:14px;font-size:12px;transform:scaleX(0.9232);transform-origin:0 0;">0000000<i style="color:transparent;font-style:normal">1</i>h</div>
<div class="t" style="left:242.03px;top:479.84px;line-height:14px;font-size:12px;transform:scaleX(0.9100);transform-origin:0 0;">8</div>
<div class="t" style="left:314.38px;top:479.84px;line-height:14px;font-size:12px;">88</div>
<div class="t" style="left:332.38px;top:479.84px;line-height:14px;font-size:12px;">88</div>
<div class="t" style="left:350.38px;top:479.84px;line-height:14px;font-size:12px;">88</div>
<div class="t" style="left:368.38px;top:479.84px;line-height:14px;font-size:12px;">88</div>
<div class="t" style="left:386.38px;top:479.84px;line-height:14px;font-size:12px;">88</div>
<div class="t" style="left:404.38px;top:479.84px;line-height:14px;font-size:12px;">88</div>
<div class="t" style="left:422.38px;top:479.84px;line-height:14px;font-size:12px;">88</div>
<div class="t" style="left:440.38px;top:479.84px;line-height:14px;font-size:12px;">88</div>
<div class="a" style="left:509px;top:480px;width:13px;height:13px;border:1px solid #646464;background:#fff"></div>
<svg style="left:509px;top:480px" width="13" height="13"><path d="M2.6 6.4L5.3 9.1L10.6 3" fill="none" stroke="#000" stroke-width="2"/></svg>
<div class="t" style="left:525.67px;top:479.84px;line-height:14px;font-size:12px;transform:scaleX(0.9100);transform-origin:0 0;"><i style="color:transparent;font-style:normal">1</i></div>
<div class="t" style="left:645.39px;top:479.84px;line-height:14px;font-size:12px;transform:scaleX(0.9100);transform-origin:0 0;">993<i style="color:transparent;font-style:normal">1</i>2</div>
<div class="t" style="left:720.14px;top:479.84px;line-height:14px;font-size:12px;transform:scaleX(0.9512);transform-origin:0 0;">Time</div>
<div class="hl" style="left:30px;top:495px;width:807px"></div>
<div class="t" style="left:31.67px;top:497.84px;line-height:14px;font-size:12px;transform:scaleX(0.9232);transform-origin:0 0;">00000002h</div>
<div class="t" style="left:242.03px;top:497.84px;line-height:14px;font-size:12px;transform:scaleX(0.9100);transform-origin:0 0;">8</div>
<div class="t" style="left:314.28px;top:497.84px;line-height:14px;font-size:12px;">77</div>
<div class="t" style="left:332.28px;top:497.84px;line-height:14px;font-size:12px;">77</div>
<div class="t" style="left:350.28px;top:497.84px;line-height:14px;font-size:12px;">77</div>
<div class="t" style="left:368.28px;top:497.84px;line-height:14px;font-size:12px;">77</div>
<div class="t" style="left:386.28px;top:497.84px;line-height:14px;font-size:12px;">77</div>
<div class="t" style="left:404.28px;top:497.84px;line-height:14px;font-size:12px;">77</div>
<div class="t" style="left:422.28px;top:497.84px;line-height:14px;font-size:12px;">77</div>
<div class="t" style="left:440.28px;top:497.84px;line-height:14px;font-size:12px;">77</div>
<div class="a" style="left:509px;top:498px;width:13px;height:13px;border:1px solid #646464;background:#fff"></div>
<svg style="left:509px;top:498px" width="13" height="13"><path d="M2.6 6.4L5.3 9.1L10.6 3" fill="none" stroke="#000" stroke-width="2"/></svg>
<div class="t" style="left:526.25px;top:497.84px;line-height:14px;font-size:12px;transform:scaleX(0.9100);transform-origin:0 0;">4</div>
<div class="t" style="left:645.35px;top:497.84px;line-height:14px;font-size:12px;transform:scaleX(0.9100);transform-origin:0 0;">24828</div>
<div class="t" style="left:720.14px;top:497.84px;line-height:14px;font-size:12px;transform:scaleX(0.9512);transform-origin:0 0;">Time</div>
<div class="hl" style="left:30px;top:513px;width:807px"></div>
<div class="t" style="left:31.67px;top:515.84px;line-height:14px;font-size:12px;transform:scaleX(0.9232);transform-origin:0 0;">00000003h</div>
<div class="t" style="left:242.03px;top:515.84px;line-height:14px;font-size:12px;transform:scaleX(0.9100);transform-origin:0 0;">8</div>
<div class="t" style="left:314.29px;top:515.84px;line-height:14px;font-size:12px;">66</div>
<div class="t" style="left:332.29px;top:515.84px;line-height:14px;font-size:12px;">66</div>
<div class="t" style="left:350.29px;top:515.84px;line-height:14px;font-size:12px;">66</div>
<div class="t" style="left:368.29px;top:515.84px;line-height:14px;font-size:12px;">66</div>
<div class="t" style="left:386.29px;top:515.84px;line-height:14px;font-size:12px;">66</div>
<div class="t" style="left:404.29px;top:515.84px;line-height:14px;font-size:12px;">66</div>
<div class="t" style="left:422.29px;top:515.84px;line-height:14px;font-size:12px;">66</div>
<div class="t" style="left:440.29px;top:515.84px;line-height:14px;font-size:12px;">66</div>
<div class="a" style="left:509px;top:516px;width:13px;height:13px;border:1px solid #646464;background:#fff"></div>
<div class="t" style="left:525.67px;top:515.84px;line-height:14px;font-size:12px;transform:scaleX(0.9100);transform-origin:0 0;"><i style="color:transparent;font-style:normal">1</i>0</div>
<div class="t" style="left:645.47px;top:515.84px;line-height:14px;font-size:12px;transform:scaleX(0.9100);transform-origin:0 0;">0</div>
<div class="hl" style="left:30px;top:531px;width:807px"></div>
<div class="t" style="left:31.67px;top:533.84px;line-height:14px;font-size:12px;transform:scaleX(0.9232);transform-origin:0 0;">00000004h</div>
<div class="t" style="left:242.03px;top:533.84px;line-height:14px;font-size:12px;transform:scaleX(0.9100);transform-origin:0 0;">8</div>
<div class="t" style="left:314.28px;top:533.84px;line-height:14px;font-size:12px;">77</div>
<div class="t" style="left:332.28px;top:533.84px;line-height:14px;font-size:12px;">77</div>
<div class="t" style="left:350.28px;top:533.84px;line-height:14px;font-size:12px;">77</div>
<div class="t" style="left:368.28px;top:533.84px;line-height:14px;font-size:12px;">77</div>
<div class="t" style="left:386.28px;top:533.84px;line-height:14px;font-size:12px;">77</div>
<div class="t" style="left:404.28px;top:533.84px;line-height:14px;font-size:12px;">77</div>
<div class="t" style="left:422.28px;top:533.84px;line-height:14px;font-size:12px;">77</div>
<div class="t" style="left:440.28px;top:533.84px;line-height:14px;font-size:12px;">77</div>
<div class="a" style="left:509px;top:534px;width:13px;height:13px;border:1px solid #646464;background:#fff"></div>
<svg style="left:509px;top:534px" width="13" height="13"><path d="M2.6 6.4L5.3 9.1L10.6 3" fill="none" stroke="#000" stroke-width="2"/></svg>
<div class="t" style="left:525.67px;top:533.84px;line-height:14px;font-size:12px;transform:scaleX(0.9100);transform-origin:0 0;"><i style="color:transparent;font-style:normal">1</i></div>
<div class="t" style="left:645.39px;top:533.84px;line-height:14px;font-size:12px;transform:scaleX(0.9100);transform-origin:0 0;">993<i style="color:transparent;font-style:normal">1</i>2</div>
<div class="t" style="left:720.14px;top:533.84px;line-height:14px;font-size:12px;transform:scaleX(0.9512);transform-origin:0 0;">Time</div>
<div class="hl" style="left:30px;top:549px;width:807px"></div>
<div class="t" style="left:31.67px;top:551.84px;line-height:14px;font-size:12px;transform:scaleX(0.9232);transform-origin:0 0;">00000005h</div>
<div class="t" style="left:242.03px;top:551.84px;line-height:14px;font-size:12px;transform:scaleX(0.9100);transform-origin:0 0;">8</div>
<div class="a" style="left:509px;top:552px;width:13px;height:13px;border:1px solid #646464;background:#fff"></div>
<div class="t" style="left:525.67px;top:551.84px;line-height:14px;font-size:12px;transform:scaleX(0.9100);transform-origin:0 0;"><i style="color:transparent;font-style:normal">1</i></div>
<div class="t" style="left:645.47px;top:551.84px;line-height:14px;font-size:12px;transform:scaleX(0.9100);transform-origin:0 0;">0</div>
<div class="hl" style="left:30px;top:567px;width:807px"></div>
<div class="t" style="left:31.67px;top:569.84px;line-height:14px;font-size:12px;transform:scaleX(0.9232);transform-origin:0 0;">00000006h</div>
<div class="t" style="left:242.03px;top:569.84px;line-height:14px;font-size:12px;transform:scaleX(0.9100);transform-origin:0 0;">8</div>
<div class="a" style="left:509px;top:570px;width:13px;height:13px;border:1px solid #646464;background:#fff"></div>
<div class="t" style="left:525.67px;top:569.84px;line-height:14px;font-size:12px;transform:scaleX(0.9100);transform-origin:0 0;"><i style="color:transparent;font-style:normal">1</i></div>
<div class="t" style="left:645.47px;top:569.84px;line-height:14px;font-size:12px;transform:scaleX(0.9100);transform-origin:0 0;">0</div>
<div class="hl" style="left:30px;top:585px;width:807px"></div>
<div class="t" style="left:31.67px;top:587.84px;line-height:14px;font-size:12px;transform:scaleX(0.9232);transform-origin:0 0;">00000007h</div>
<div class="t" style="left:242.03px;top:587.84px;line-height:14px;font-size:12px;transform:scaleX(0.9100);transform-origin:0 0;">8</div>
<div class="a" style="left:509px;top:588px;width:13px;height:13px;border:1px solid #646464;background:#fff"></div>
<div class="t" style="left:525.67px;top:587.84px;line-height:14px;font-size:12px;transform:scaleX(0.9100);transform-origin:0 0;"><i style="color:transparent;font-style:normal">1</i></div>
<div class="t" style="left:645.47px;top:587.84px;line-height:14px;font-size:12px;transform:scaleX(0.9100);transform-origin:0 0;">0</div>
<div class="hl" style="left:30px;top:603px;width:807px"></div>
<div class="t" style="left:31.57px;top:605.84px;line-height:14px;font-size:12px;transform:scaleX(0.9232);transform-origin:0 0;">0<i style="color:transparent;font-style:normal">1</i>234567h</div>
<svg style="left:161px;top:607px" width="34" height="11"><use href="#fd"/><use href="#brs"/></svg>
<div class="t" style="left:241.95px;top:605.84px;line-height:14px;font-size:12px;transform:scaleX(0.9100);transform-origin:0 0;">20</div>
<div class="t" style="left:332.30px;top:605.84px;line-height:14px;font-size:12px;">22</div>
<div class="t" style="left:350.44px;top:605.84px;line-height:14px;font-size:12px;">33</div>
<div class="t" style="left:368.62px;top:605.84px;line-height:14px;font-size:12px;">44</div>
<div class="t" style="left:386.42px;top:605.84px;line-height:14px;font-size:12px;">55</div>
<div class="t" style="left:404.29px;top:605.84px;line-height:14px;font-size:12px;">66</div>
<div class="t" style="left:422.28px;top:605.84px;line-height:14px;font-size:12px;">77</div>
<div class="t" style="left:440.38px;top:605.84px;line-height:14px;font-size:12px;">88</div>
<div class="t" style="left:458.34px;top:605.84px;line-height:14px;font-size:12px;">99</div>
<div class="t" style="left:477.18px;top:605.84px;line-height:14px;font-size:12px;transform:scaleX(0.9000);transform-origin:0 0;">AA</div>
<div class="t" style="left:314.31px;top:620.84px;line-height:14px;font-size:12px;transform:scaleX(0.9000);transform-origin:0 0;">BB</div>
<div class="t" style="left:332.65px;top:620.84px;line-height:14px;font-size:12px;transform:scaleX(0.9000);transform-origin:0 0;">CC</div>
<div class="t" style="left:350.31px;top:620.84px;line-height:14px;font-size:12px;transform:scaleX(0.9000);transform-origin:0 0;">DD</div>
<div class="t" style="left:368.31px;top:620.84px;line-height:14px;font-size:12px;transform:scaleX(0.9000);transform-origin:0 0;">EE</div>
<div class="t" style="left:386.31px;top:620.84px;line-height:14px;font-size:12px;transform:scaleX(0.9000);transform-origin:0 0;">FF</div>
<div class="t" style="left:404.43px;top:620.84px;line-height:14px;font-size:12px;">0</div>
<div class="t" style="left:422.43px;top:620.84px;line-height:14px;font-size:12px;">00</div>
<div class="t" style="left:440.43px;top:620.84px;line-height:14px;font-size:12px;">00</div>
<div class="t" style="left:458.43px;top:620.84px;line-height:14px;font-size:12px;">00</div>
<div class="t" style="left:476.43px;top:620.84px;line-height:14px;font-size:12px;">00</div>
<div class="a" style="left:509px;top:606px;width:13px;height:13px;border:1px solid #646464;background:#fff"></div>
<div class="t" style="left:525.67px;top:605.84px;line-height:14px;font-size:12px;transform:scaleX(0.9100);transform-origin:0 0;"><i style="color:transparent;font-style:normal">1</i></div>
<div class="t" style="left:645.47px;top:605.84px;line-height:14px;font-size:12px;transform:scaleX(0.9100);transform-origin:0 0;">0</div>
<div class="hl" style="left:30px;top:636px;width:807px"></div>
<div class="t" style="left:31.83px;top:638.84px;line-height:14px;font-size:12px;transform:scaleX(0.9479);transform-origin:0 0;"><i style="color:transparent;font-style:normal">1</i>23h</div>
<div class="t" style="left:242.03px;top:638.84px;line-height:14px;font-size:12px;transform:scaleX(0.9100);transform-origin:0 0;">8</div>
<div class="t" style="left:332.30px;top:638.84px;line-height:14px;font-size:12px;">22</div>
<div class="t" style="left:350.44px;top:638.84px;line-height:14px;font-size:12px;">33</div>
<div class="t" style="left:368.62px;top:638.84px;line-height:14px;font-size:12px;">44</div>
<div class="t" style="left:386.42px;top:638.84px;line-height:14px;font-size:12px;">55</div>
<div class="t" style="left:404.29px;top:638.84px;line-height:14px;font-size:12px;">66</div>
<div class="t" style="left:422.28px;top:638.84px;line-height:14px;font-size:12px;">77</div>
<div class="t" style="left:440.38px;top:638.84px;line-height:14px;font-size:12px;">88</div>
<div class="t" style="left:509.95px;top:638.84px;line-height:14px;font-size:12px;transform:scaleX(0.9500);transform-origin:0 0;">Wait</div>
<div class="t" style="left:645.47px;top:638.84px;line-height:14px;font-size:12px;transform:scaleX(0.9100);transform-origin:0 0;">0</div>
<div class="hl" style="left:30px;top:654px;width:807px"></div>
<svg style="left:0;top:0" width="844" height="776"><use href="#one" x="32.93" y="410"/><use href="#one" x="39.06" y="410"/><use href="#one" x="45.19" y="410"/><use href="#one" x="51.32" y="410"/><use href="#one" x="57.45" y="410"/><use href="#one" x="63.58" y="410"/><use href="#one" x="69.7" y="410"/><use href="#one" x="75.83" y="410"/><use href="#one" x="316" y="410"/><use href="#one" x="323" y="410"/><use href="#one" x="334" y="410"/><use href="#one" x="341" y="410"/><use href="#one" x="352" y="410"/><use href="#one" x="359" y="410"/><use href="#one" x="370" y="410"/><use href="#one" x="377" y="410"/><use href="#one" x="388" y="410"/><use href="#one" x="395" y="410"/><use href="#one" x="406" y="410"/><use href="#one" x="413" y="410"/><use href="#one" x="424" y="410"/><use href="#one" x="431" y="410"/><use href="#one" x="442" y="410"/><use href="#one" x="449" y="410"/><use href="#one" x="526.62" y="410"/><use href="#one" x="32.93" y="428"/><use href="#one" x="39.06" y="428"/><use href="#one" x="45.19" y="428"/><use href="#one" x="51.32" y="428"/><use href="#one" x="57.45" y="428"/><use href="#one" x="63.58" y="428"/><use href="#one" x="69.7" y="428"/><use href="#one" x="75.83" y="428"/><use href="#one" x="316" y="428"/><use href="#one" x="323" y="428"/><use href="#one" x="334" y="428"/><use href="#one" x="341" y="428"/><use href="#one" x="352" y="428"/><use href="#one" x="359" y="428"/><use href="#one" x="370" y="428"/><use href="#one" x="377" y="428"/><use href="#one" x="388" y="428"/><use href="#one" x="395" y="428"/><use href="#one" x="406" y="428"/><use href="#one" x="413" y="428"/><use href="#one" x="424" y="428"/><use href="#one" x="431" y="428"/><use href="#one" x="442" y="428"/><use href="#one" x="449" y="428"/><use href="#one" x="526.62" y="428"/><use href="#one" x="316" y="446"/><use href="#one" x="323" y="446"/><use href="#one" x="334" y="446"/><use href="#one" x="341" y="446"/><use href="#one" x="352" y="446"/><use href="#one" x="359" y="446"/><use href="#one" x="370" y="446"/><use href="#one" x="377" y="446"/><use href="#one" x="388" y="446"/><use href="#one" x="395" y="446"/><use href="#one" x="406" y="446"/><use href="#one" x="413" y="446"/><use href="#one" x="424" y="446"/><use href="#one" x="431" y="446"/><use href="#one" x="442" y="446"/><use href="#one" x="449" y="446"/><use href="#one" x="526.62" y="446"/><use href="#one" x="316" y="464"/><use href="#one" x="323" y="464"/><use href="#one" x="334" y="464"/><use href="#one" x="341" y="464"/><use href="#one" x="352" y="464"/><use href="#one" x="359" y="464"/><use href="#one" x="370" y="464"/><use href="#one" x="377" y="464"/><use href="#one" x="388" y="464"/><use href="#one" x="395" y="464"/><use href="#one" x="406" y="464"/><use href="#one" x="413" y="464"/><use href="#one" x="424" y="464"/><use href="#one" x="431" y="464"/><use href="#one" x="442" y="464"/><use href="#one" x="449" y="464"/><use href="#one" x="526.62" y="464"/><use href="#one" x="664.56" y="464"/><use href="#one" x="75.78" y="482"/><use href="#one" x="526.62" y="482"/><use href="#one" x="664.56" y="482"/><use href="#one" x="526.62" y="518"/><use href="#one" x="526.62" y="536"/><use href="#one" x="664.56" y="536"/><use href="#one" x="316" y="554"/><use href="#one" x="323" y="554"/><use href="#one" x="334" y="554"/><use href="#one" x="341" y="554"/><use href="#one" x="352" y="554"/><use href="#one" x="359" y="554"/><use href="#one" x="370" y="554"/><use href="#one" x="377" y="554"/><use href="#one" x="388" y="554"/><use href="#one" x="395" y="554"/><use href="#one" x="406" y="554"/><use href="#one" x="413" y="554"/><use href="#one" x="424" y="554"/><use href="#one" x="431" y="554"/><use href="#one" x="442" y="554"/><use href="#one" x="449" y="554"/><use href="#one" x="526.62" y="554"/><use href="#one" x="316" y="572"/><use href="#one" x="323" y="572"/><use href="#one" x="334" y="572"/><use href="#one" x="341" y="572"/><use href="#one" x="352" y="572"/><use href="#one" x="359" y="572"/><use href="#one" x="370" y="572"/><use href="#one" x="377" y="572"/><use href="#one" x="388" y="572"/><use href="#one" x="395" y="572"/><use href="#one" x="406" y="572"/><use href="#one" x="413" y="572"/><use href="#one" x="424" y="572"/><use href="#one" x="431" y="572"/><use href="#one" x="442" y="572"/><use href="#one" x="449" y="572"/><use href="#one" x="526.62" y="572"/><use href="#one" x="316" y="590"/><use href="#one" x="323" y="590"/><use href="#one" x="334" y="590"/><use href="#one" x="341" y="590"/><use href="#one" x="352" y="590"/><use href="#one" x="359" y="590"/><use href="#one" x="370" y="590"/><use href="#one" x="377" y="590"/><use href="#one" x="388" y="590"/><use href="#one" x="395" y="590"/><use href="#one" x="406" y="590"/><use href="#one" x="413" y="590"/><use href="#one" x="424" y="590"/><use href="#one" x="431" y="590"/><use href="#one" x="442" y="590"/><use href="#one" x="449" y="590"/><use href="#one" x="526.62" y="590"/><use href="#one" x="38.72" y="608"/><use href="#one" x="316" y="608"/><use href="#one" x="323" y="608"/><use href="#one" x="413" y="623"/><use href="#one" x="526.62" y="608"/><use href="#one" x="32.9" y="641"/><use href="#one" x="316" y="641"/><use href="#one" x="323" y="641"/></svg>
<svg style="left:8px;top:755px" width="14" height="14"><circle cx="7" cy="7" r="7" fill="#4ea56f"/><path d="M3.5 7.2L6 9.6L10.5 4.8" fill="none" stroke="#fff" stroke-width="2"/></svg>
<div class="t bw" style="left:27.05px;top:754.84px;line-height:14px;font-size:12px;transform:scaleX(1.0594);transform-origin:0 0;">Connected to hardware PCAN-USB FD</div>
<div class="t bw" style="left:285.08px;top:754.84px;line-height:14px;font-size:12px;transform:scaleX(1.1333);transform-origin:0 0;">Bit rate: 1 MBit/s / 2 MBit/s</div>
<div class="t bw" style="left:463.34px;top:754.84px;line-height:14px;font-size:12px;transform:scaleX(1.0192);transform-origin:0 0;">Status:</div>
<div class="t" style="left:508.92px;top:754.84px;line-height:14px;font-size:12px;transform:scaleX(1.0220);transform-origin:0 0;color:#8ad4ae">OK</div>
<div class="t bw" style="left:666.59px;top:754.84px;line-height:14px;font-size:12px;transform:scaleX(1.0819);transform-origin:0 0;">Overruns: 0</div>
<div class="t bw" style="left:749.40px;top:754.84px;line-height:14px;font-size:12px;transform:scaleX(1.0512);transform-origin:0 0;">QXmtFull: 0</div>
<div class="a" style="left:277px;top:753px;width:1px;height:17px;background:#56647f"></div>
<div class="a" style="left:454px;top:753px;width:1px;height:17px;background:#56647f"></div>
<div class="a" style="left:660px;top:753px;width:1px;height:17px;background:#56647f"></div>
<div class="a" style="left:742px;top:753px;width:1px;height:17px;background:#56647f"></div>
<svg style="left:0;top:746px" width="844" height="30" viewBox="0 746 844 30">
<circle cx="256.8" cy="761.6" r="2.4" fill="#fff"/>
<rect x="256.8" y="760.9" width="12.5" height="1.5" fill="#fff"/>
<path d="M268.6 759 L272.2 761.6 L268.6 764.2 Z" fill="#fff"/>
<path d="M260.4 761.6 L263.6 757.8 M260.4 761.6 L264.8 766" fill="none" stroke="#fff" stroke-width="1.2"/>
<circle cx="264.2" cy="757.4" r="1.6" fill="#fff"/>
<rect x="264" y="764.4" width="2.8" height="3.4" fill="#fff"/>
</svg>

<div class="a" style="left:839px;top:764px;width:2px;height:2px;background:#fff"></div>
<div class="a" style="left:835px;top:768px;width:2px;height:2px;background:#fff"></div>
<div class="a" style="left:839px;top:768px;width:2px;height:2px;background:#fff"></div>
<div class="a" style="left:831px;top:772px;width:2px;height:2px;background:#fff"></div>
<div class="a" style="left:835px;top:772px;width:2px;height:2px;background:#fff"></div>
<div class="a" style="left:839px;top:772px;width:2px;height:2px;background:#fff"></div>
<div class="a" style="left:0;top:0;width:844px;height:776px;border:1px solid #29506f"></div>
</body></html>
